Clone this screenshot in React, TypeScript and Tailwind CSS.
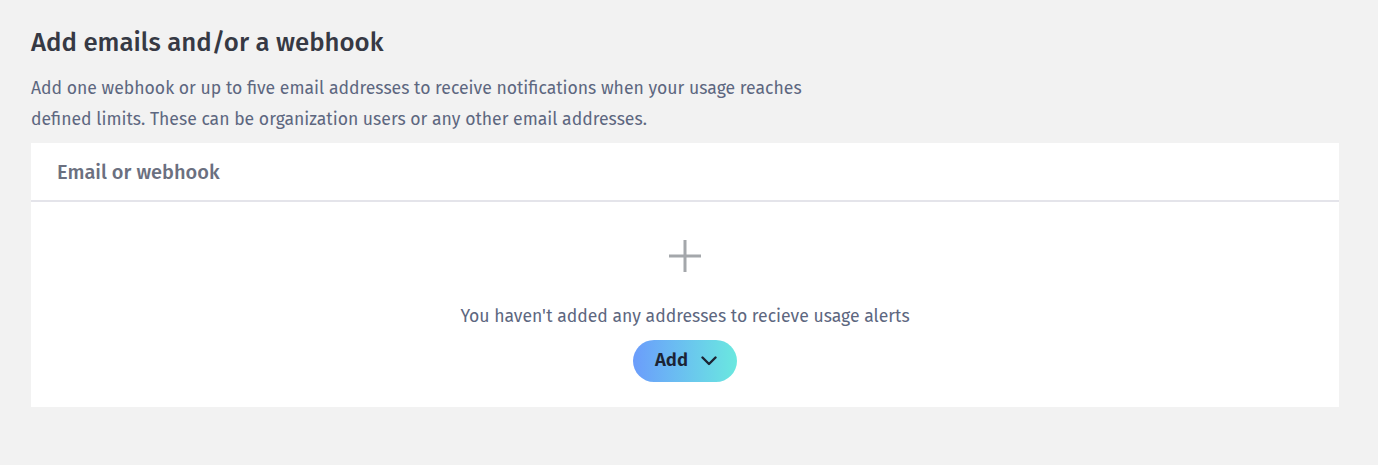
import React from "react";

function ChevronDown() {
  return (
    <svg width="16" height="16" viewBox="0 0 16 16" fill="none" stroke="currentColor" strokeWidth="2.4" strokeLinecap="round" strokeLinejoin="round">
      <path d="M1.5 4.5L8 11l6.5-6.5" />
    </svg>
  );
}

function PlusIcon() {
  return (
    <svg width="32" height="32" viewBox="0 0 32 32" fill="none" stroke="#a4a7ab" strokeWidth="3">
      <path d="M16 0v32M0 16h32" />
    </svg>
  );
}

export default function App() {
  return (
    <div
      className="min-h-[465px] w-full bg-[#f2f2f2] pl-[31px] pr-[39px] pt-[27px]"
      style={{ fontFamily: '"Fira Sans", "Noto Sans", "Open Sans", sans-serif' }}
    >
      <h2 className="text-[25.8px] font-medium leading-[32px] text-[#363944]">
        Add emails and/or a webhook
      </h2>
      <p className="mt-[14px] max-w-[800px] text-[17.6px] leading-[31px] text-[#5d6780]">
        Add one webhook or up to five email addresses to receive notifications when your usage reaches
        defined limits. These can be organization users or any other email addresses.
      </p>
      <div className="mt-[8px] bg-white">
        <div className="flex h-[59px] items-center border-b-2 border-[#e4e4ea] px-[26px]">
          <span className="text-[20px] font-medium text-[#6b7080]">Email or webhook</span>
        </div>
        <div className="flex flex-col items-center pb-[25px] pt-[38px]">
          <PlusIcon />
          <p className="mt-[33px] text-[17.6px] leading-[24px] text-[#5d6780]">
            You haven't added any addresses to recieve usage alerts
          </p>
          <button className="mt-[11px] flex h-[42px] w-[104px] items-center justify-center gap-[13px] rounded-full bg-gradient-to-r from-[#6b9cfb] to-[#6ae8df] pl-[2px] text-[18.5px] font-semibold text-[#1c2434]">
            <span>Add</span>
            <ChevronDown />
          </button>
        </div>
      </div>
    </div>
  );
}
